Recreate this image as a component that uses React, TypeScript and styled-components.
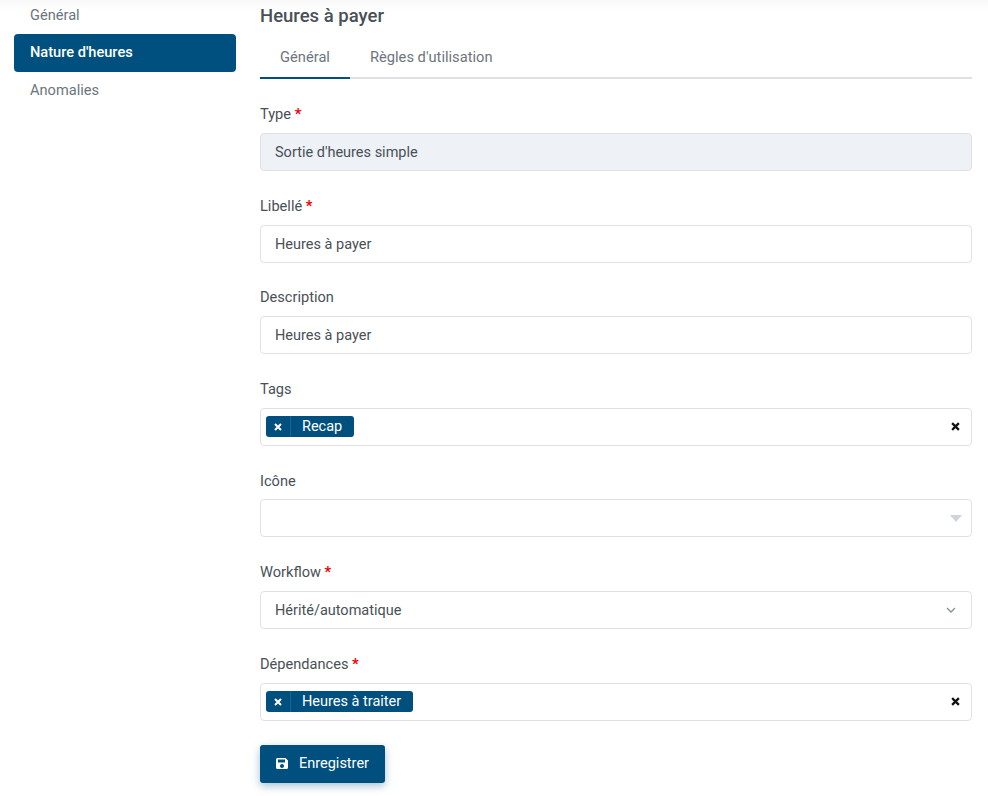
import React from "react";
import styled, { createGlobalStyle } from "styled-components";

const Global = createGlobalStyle`
  html, body { margin: 0; padding: 0; background: #fff; height: 100%; overflow: hidden; }
  body { font-family: "Roboto", "Liberation Sans", sans-serif; font-size: 14.5px; color: #495057; }
`;
const Page = styled.div`
  display: flex; width: 988px; height: 796px; box-sizing: border-box; overflow: hidden; padding: 0 16px 0 14px; gap: 24px;
  background: linear-gradient(#f8f8f9 0, #fff 10px);
`;
const Side = styled.nav`width: 222px; flex: none; display: flex; flex-direction: column;`;
const SideItem = styled.div<{ $active?: boolean }>`
  height: 37.5px; line-height: 37px; padding: 0 16px; border-radius: 4px; font-size: 14.6px; box-sizing: border-box;
  color: ${p => (p.$active ? "#fff" : "#6c757d")};
  background: ${p => (p.$active ? "#00507f" : "transparent")};
  font-weight: ${p => (p.$active ? 500 : 400)};
`;
const SideList = styled.div`margin-top: -3.5px; display: flex; flex-direction: column;`;
const Main = styled.main`flex: 1; min-width: 0;`;
const Title = styled.h1`margin: 6px 0 0; font-size: 18.5px; line-height: 20px; font-weight: 500; color: #495057;`;
const Tabs = styled.div`display: flex; margin-top: 10px; border-bottom: 2px solid #dee2e6; height: 41px; box-sizing: content-box;`;
const Tab = styled.div<{ $active?: boolean }>`
  padding: 0 20px; line-height: 42px; height: 41px; margin-bottom: -2px; font-size: 14.7px; color: #6c757d;
  border-bottom: 2px solid ${p => (p.$active ? "#00507f" : "transparent")};
`;
const Form = styled.form`display: flex; flex-direction: column; margin-top: 25.2px;`;
const Field = styled.div`display: flex; flex-direction: column; height: 91.6px;`;
const Label = styled.label`font-size: 14.6px; line-height: 20px; color: #495057; margin-bottom: 8.8px;`;
const Star = styled.span`color: #e00; font-weight: 700;`;
const Control = styled.div<{ $disabled?: boolean }>`
  height: 38px; flex: none; box-sizing: border-box; border: 1px solid #dee2e6; border-radius: 4px; padding: 1.6px 14px 0; display: flex; align-items: center;
  justify-content: space-between; font-size: 14.5px; color: #495057;
  background: ${p => (p.$disabled ? "#eef1f6" : "#fff")};
`;
const ChipControl = styled(Control)`padding: 0 11px 0 5px;`;
const Chip = styled.span`
  display: inline-flex; align-items: center; height: 21px; background: #00507f; color: #fff; border-radius: 3px; font-size: 14.5px;
`;
const ChipX = styled.span`width: 24px; height: 21px; display: flex; align-items: center; justify-content: center; border-right: 1px solid #1a6391;`;
const ChipText = styled.span`padding: 0 12px 0 11px;`;
const Caret = styled.svg`width: 12px; height: 7px; margin: -2px -5px 0 0;`;
const Chevron = styled.svg`width: 10px; height: 6px; margin: -2px 1px 0 0;`;
const SaveBtn = styled.button`
  display: flex; align-items: center; gap: 10px; width: 125px; height: 38px; margin-top: -0.4px; padding: 0 16px; box-sizing: border-box; flex: none;
  background: #00507f; color: #fff; border: 0; border-radius: 3px; font: inherit; font-size: 14.5px;
  box-shadow: 0 3px 8px rgba(0, 80, 127, .35);
`;
const X = ({ color, size = 8 }: { color: string; size?: number }) => (
  <svg width={size} height={size} viewBox="0 0 8 8"><path d="M1 1l6 6M7 1L1 7" stroke={color} strokeWidth={2} /></svg>
);

export default function App() {
  return (
    <Page>
      <Global />
      <Side>
        <SideList>
          <SideItem>Général</SideItem>
          <SideItem $active>Nature d'heures</SideItem>
          <SideItem>Anomalies</SideItem>
        </SideList>
      </Side>
      <Main>
        <Title>Heures à payer</Title>
        <Tabs>
          <Tab $active>Général</Tab>
          <Tab>Règles d'utilisation</Tab>
        </Tabs>
        <Form>
          <Field>
            <Label>Type <Star>*</Star></Label>
            <Control $disabled>Sortie d'heures simple</Control>
          </Field>
          <Field>
            <Label>Libellé <Star>*</Star></Label>
            <Control>Heures à payer</Control>
          </Field>
          <Field>
            <Label>Description</Label>
            <Control>Heures à payer</Control>
          </Field>
          <Field>
            <Label>Tags</Label>
            <ChipControl>
              <Chip><ChipX><X color="#fff" /></ChipX><ChipText>Recap</ChipText></Chip>
              <X color="#111" size={9} />
            </ChipControl>
          </Field>
          <Field>
            <Label>Icône</Label>
            <Control>
              <span />
              <Caret viewBox="0 0 12 7"><path d="M0 0h12L6 7z" fill="#ced4da" /></Caret>
            </Control>
          </Field>
          <Field>
            <Label>Workflow <Star>*</Star></Label>
            <Control>
              Hérité/automatique
              <Chevron viewBox="0 0 10 6"><path d="M1 1l4 4 4-4" fill="none" stroke="#868e96" strokeWidth="1.3" /></Chevron>
            </Control>
          </Field>
          <Field>
            <Label>Dépendances <Star>*</Star></Label>
            <ChipControl>
              <Chip><ChipX><X color="#fff" /></ChipX><ChipText>Heures à traiter</ChipText></Chip>
              <X color="#111" size={9} />
            </ChipControl>
          </Field>
          <SaveBtn type="button">
            <svg width="13" height="13" viewBox="0 0 13 13"><path fillRule="evenodd" d="M1.5 1h8L12 3.5v7A1.5 1.5 0 0 1 10.500 12h-9A1.500 1.500 0 0 1 0 10.500v-8A1.500 1.500 0 0 1 1.500 1zM2 2.500v3h7v-3zM6 7a2 2 0 1 0 .01 0z" fill="#fff" /></svg>
            Enregistrer
          </SaveBtn>
        </Form>
      </Main>
    </Page>
  );
}
